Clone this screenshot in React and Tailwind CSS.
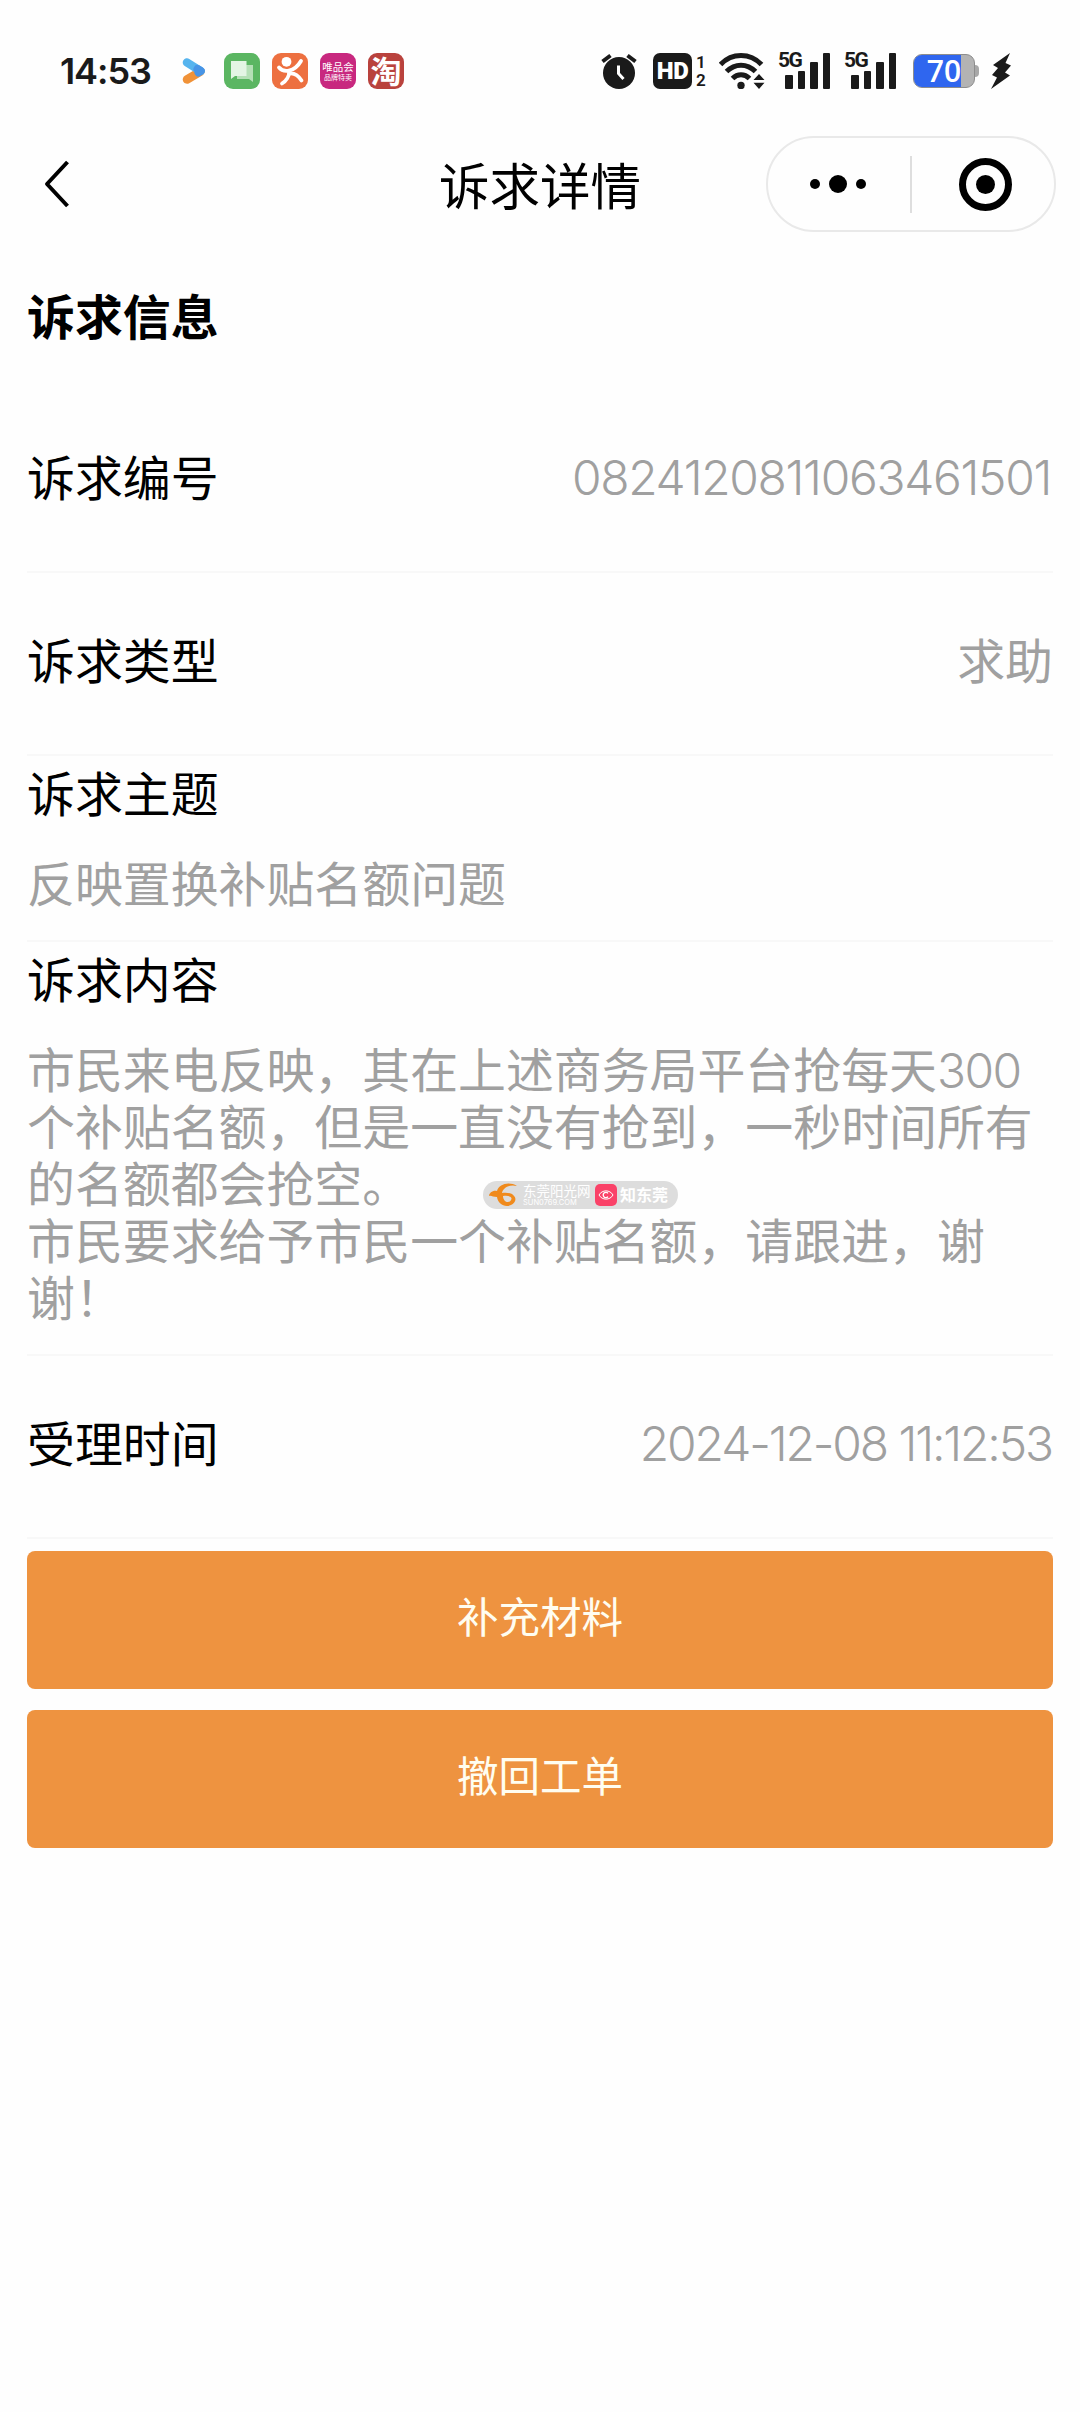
const cjk = "font-['Inter','Noto_Sans_CJK_SC',sans-serif]";

function PlayIcon() {
  return (
    <svg className="block h-9 w-6" viewBox="0 0 24 36" fill="none" strokeLinecap="round">
      <path d="M5 26.500 L18.500 18.500" stroke="#f09238" strokeWidth="8.500" />
      <path d="M5 9.500 L18.500 18" stroke="#56b4ee" strokeWidth="8.500" />
      <path d="M15.500 16 L18.800 18 L16.500 19.500" stroke="#4794e6" strokeWidth="8" strokeLinejoin="round" />
    </svg>
  );
}

function ChatIcon() {
  return (
    <svg className="block size-9" viewBox="0 0 36 36">
      <rect width="36" height="36" rx="9" fill="#5bb662" />
      <path d="M13 12h16v17l-4-3H13z" fill="#b5e0b6" />
      <path d="M7 8h15.500v15H11l-4 3z" fill="#e4f5e4" />
    </svg>
  );
}

function RunnerIcon() {
  return (
    <svg className="block size-9" viewBox="0 0 36 36">
      <rect width="36" height="36" rx="9" fill="#ed7040" />
      <circle cx="14.500" cy="8.800" r="4.900" fill="#fff" />
      <g fill="none" stroke="#fff" strokeWidth="3.800" strokeLinecap="round" strokeLinejoin="round">
        <path d="M7 14.500C11 19.500 22 20 29 8" />
        <path d="M17.500 18C17.500 23 14 28 10 30.500" />
        <path d="M17 20.500C22 19.500 26 22 29.500 27.500" />
      </g>
    </svg>
  );
}

function AlarmIcon() {
  return (
    <svg className="block size-9" viewBox="0 0 36 36" fill="none">
      <circle cx="18" cy="20" r="16" fill="#1a1a1a" />
      <path d="M1.500 8.500 L9.500 2.500 M34.500 8.500 L26.500 2.500" stroke="#1a1a1a" strokeWidth="4" />
      <path d="M17.500 12.500V20.500L22.500 26" stroke="#fff" strokeWidth="3" />
    </svg>
  );
}

function WifiIcon() {
  return (
    <svg className="block h-9 w-[46px]" viewBox="0 0 46 36" fill="none">
      <g stroke="#1a1a1a" strokeWidth="5">
        <path d="M1.500 11.500C13 -0.500 31 -0.500 42.500 11.500" />
        <path d="M7.500 18.500C16 10 28 10 36.500 18.500" />
        <path d="M13.500 25.500C18.500 20.500 25.500 20.500 30.500 25.500" />
      </g>
      <circle cx="22" cy="32.500" r="3.700" fill="#1a1a1a" />
      <path d="M40 19.500L46.500 28H33.500z" fill="#fff" stroke="#fff" strokeWidth="3" />
      <path d="M40 21L45.500 27H34.500zM40 36L45.500 29.800H34.500z" fill="#1a1a1a" />
    </svg>
  );
}

function Signal() {
  return (
    <div className="relative flex h-9 w-[52px] items-end justify-end gap-[5px]">
      <span className="absolute -top-[3px] left-0 text-[21px] leading-[21px] font-bold tracking-[-1.500px] font-['Roboto',sans-serif]">
        5G
      </span>
      <i className="h-[14px] w-[7.500px] rounded-[1px] bg-[#1a1a1a]" />
      <i className="h-[18px] w-[7.500px] rounded-[1px] bg-[#1a1a1a]" />
      <i className="h-[27px] w-[7.500px] rounded-[1px] bg-[#1a1a1a]" />
      <i className="h-9 w-[7.500px] rounded-[1px] bg-[#1a1a1a]" />
    </div>
  );
}

function Battery() {
  return (
    <div className="flex items-center pt-[1px]">
      <div className="relative flex h-[34px] w-[62px] items-center rounded-[9px] border border-[#8d8d8d] bg-[#b3b3b3]">
        <div className="h-full w-[47px] rounded-l-[8px] bg-[#2f66ef]" />
        <span className="absolute inset-0 flex items-center justify-center text-[30px] leading-8 font-semibold text-white font-['Open_Sans',sans-serif]">
          70
        </span>
      </div>
      <div className="h-3 w-1 rounded-r bg-[#a8a8a8]" />
    </div>
  );
}

function StatusBar() {
  return (
    <div className="flex h-[124px] pt-[53px] text-[#1a1a1a]">
      <div className="ml-[60px] flex h-9 w-[122px] items-center text-[36px] leading-9 font-semibold font-['Inter',sans-serif]">
        <span className="tracking-[-1.100px]">14:53</span>
      </div>
      <PlayIcon />
      <div className="ml-[18px] flex gap-3">
        <ChatIcon />
        <RunnerIcon />
        <div className="flex size-9 flex-col items-center justify-center rounded-[9px] bg-[#c8287f] whitespace-nowrap text-white font-['Noto_Sans_CJK_SC',sans-serif]">
          <span className="text-[10.500px] leading-[12px]">唯品会</span>
          <span className="text-[7px] leading-[9px]">品牌特卖</span>
        </div>
        <div className="flex size-9 items-center justify-center rounded-[9px] bg-[#b9423d] pb-[2px] text-[31px] leading-[34px] font-bold text-white font-['Noto_Sans_CJK_SC',sans-serif]">
          淘
        </div>
      </div>
      <div className="ml-[197px] flex h-9">
        <AlarmIcon />
        <div className="ml-4 flex h-9 w-[39px] items-center justify-center rounded-[7px] bg-[#1a1a1a] text-[24px] leading-9 font-black tracking-[-0.500px] text-white font-['Roboto',sans-serif]">
          HD
        </div>
        <div className="ml-1 flex w-[10px] flex-col text-[17px] leading-[18px] font-semibold font-['Roboto',sans-serif]">
          <span>1</span>
          <span>2</span>
        </div>
        <div className="ml-[13px]">
          <WifiIcon />
        </div>
        <div className="ml-[13px] flex gap-[14px]">
          <Signal />
          <Signal />
        </div>
        <div className="ml-[17px]">
          <Battery />
        </div>
        <svg className="ml-3 block h-9 w-5" viewBox="0 0 20 36">
          <path d="M19 0L2 12L7 15L1 22L6 24.500L0 36L19 22.500L14 19.500L20 12.500L14.500 10z" fill="#1a1a1a" />
        </svg>
      </div>
    </div>
  );
}

function NavBar() {
  return (
    <div className="grid h-[120px] grid-cols-[1fr_auto_1fr] items-center px-6">
      <svg className="ml-5 block h-[48px] w-[26px]" viewBox="0 0 26 48" fill="none" stroke="#000" strokeWidth="4">
        <path d="M23.500 2L3 24L23.500 46" strokeLinejoin="round" />
      </svg>
      <h1 className="pt-[6px] text-[50.500px] leading-[60px] font-normal text-black">诉求详情</h1>
      <div className="flex h-24 w-[290px] items-center justify-self-end rounded-full border-2 border-[#e9e9e9]">
        <div className="flex w-[142px] items-center justify-center gap-[9px] pr-[2px]">
          <i className="size-[10px] rounded-full bg-black" />
          <i className="size-[18px] rounded-full bg-black" />
          <i className="size-[10px] rounded-full bg-black" />
        </div>
        <div className="h-[57px] w-[2px] bg-[#dedede]" />
        <div className="flex flex-1 justify-center pl-[4px]">
          <div className="flex size-[53px] items-center justify-center rounded-full border-[7px] border-black">
            <i className="size-[19px] rounded-full bg-black" />
          </div>
        </div>
      </div>
    </div>
  );
}

function Row({ label, children }) {
  return (
    <div className="flex h-[183px] items-center justify-between border-b-2 border-[#f8f8f8] pb-[2px]">
      <span>{label}</span>
      <span className="text-[#a0a0a0]">{children}</span>
    </div>
  );
}

function Watermark() {
  return (
    <div className="flex h-7 w-[195px] items-center rounded-full bg-[#dddddd] pl-[6px] whitespace-nowrap text-white">
      <svg className="block h-6 w-[30px]" viewBox="0 0 30 24" fill="#f08a1c">
        <path d="M28 3C20 -2 10 1 8 8C4 7 0 10 0 13C2 12 4 14 8 14C9 21 16 25 22 22C26 20 28 16 25 13C23 10 17 9 13 10C14 5 20 1 28 3zM14 13C20 12 24 14 22 17C20 21 14 19 14 13z" />
      </svg>
      <div className="ml-1 flex w-[67px] flex-col">
        <span className="text-[13.500px] leading-[15px]">东莞阳光网</span>
        <span className="text-[7.500px] leading-[8px]">SUN0769.COM</span>
      </div>
      <div className="ml-[5px] flex size-[22px] items-center justify-center rounded-[5px] bg-[#fa4268]">
        <svg className="block size-4" viewBox="0 0 16 16" fill="none" stroke="#fff">
          <path d="M1 8C4 2.500 12 2.500 15 8C12 13.500 4 13.500 1 8z" />
          <path d="M10 6.300A2.700 2.700 0 1 0 10 9.700" strokeWidth="1.300" />
        </svg>
      </div>
      <span className="ml-[3px] text-[16px] leading-5 font-bold">知东莞</span>
    </div>
  );
}

function ActionButton({ children }) {
  return (
    <button className="h-[138px] w-full rounded-lg bg-[#ee9340] pb-1 text-[41.500px] leading-[60px] text-[#fffdf0]">
      {children}
    </button>
  );
}

export default function App() {
  return (
    <div className={`h-[2412px] w-[1080px] overflow-hidden bg-[#fefefe] text-black ${cjk}`}>
      <StatusBar />
      <NavBar />
      <main className="px-[27px] text-[47.900px] leading-[57px]">
        <h2 className="flex h-[146px] items-center pt-[3px] font-bold">诉求信息</h2>
        <Row label="诉求编号">
          <span className="mr-[2px] block pb-[2px] font-light tracking-[-1.300px]">0824120811063461501</span>
        </Row>
        <Row label="诉求类型">求助</Row>
        <section className="h-[186px] border-b-2 border-[#f8f8f8] pt-[11px]">
          <div>诉求主题</div>
          <p className="mt-[33px] text-[#a0a0a0]">反映置换补贴名额问题</p>
        </section>
        <section className="relative h-[414px] border-b-2 border-[#f8f8f8] pt-[11px]">
          <div>诉求内容</div>
          <p className="mt-[33px] whitespace-pre text-[#a0a0a0]">
            市民来电反映，其在上述商务局平台抢每天<span className="font-light tracking-[-1.500px]">300</span>
            <br />
            个补贴名额，但是一直没有抢到，一秒时间所有
            <br />
            的名额都会抢空。
            <br />
            市民要求给予市民一个补贴名额，请跟进，谢
            <br />
            谢！
          </p>
          <div className="absolute top-[239px] left-[456px]">
            <Watermark />
          </div>
        </section>
        <Row label="受理时间">
          <span className="mr-[1px] block pb-[2px] font-light tracking-[-2.100px]">2024-12-08 11:12:53</span>
        </Row>
        <div className="mt-[12px] flex flex-col gap-[21px]">
          <ActionButton>补充材料</ActionButton>
          <ActionButton>撤回工单</ActionButton>
        </div>
      </main>
    </div>
  );
}
